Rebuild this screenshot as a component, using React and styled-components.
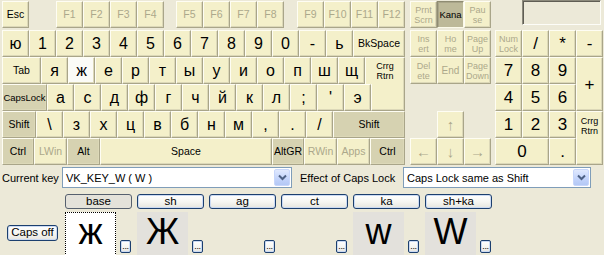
import React from "react";
import styled, { createGlobalStyle, css } from "styled-components";

const GlobalStyle = createGlobalStyle`
  html, body { margin: 0; padding: 0; }
  body {
    background: #ece9d8;
    font-family: "Liberation Sans", Arial, sans-serif;
  }
`;

const faces = {
  normal: "#f4f0ca",
  mod: "#d6d2b1",
  down: "#bdb999",
  sel: "#fbfbf7",
};

const Window = styled.div`
  width: 604px;
  height: 255px;
  overflow: hidden;
  background: #ece9d8;
`;

const Board = styled.div`
  display: flex;
  padding: 1px 0 0 2px;
`;

const Column = styled.div`
  display: flex;
  flex-direction: column;
  gap: 2px;
  margin-left: ${(p) => p.$ml || 0}px;
`;

const Row = styled.div`
  display: flex;
  height: 27px;
`;

const Key = styled.div`
  box-sizing: border-box;
  flex: 0 0 ${(p) => p.$w || 27}px;
  margin-left: ${(p) => p.$ml || 0}px;
  display: flex;
  align-items: ${(p) => (p.$top ? "flex-start" : "center")};
  justify-content: center;
  padding-top: ${(p) => (p.$top ? 4 : 0)}px;
  text-align: center;
  white-space: nowrap;
  font-size: ${(p) => p.$fs || 16}px;
  line-height: ${(p) => (p.$two ? "10px" : 1)};
  color: ${(p) => (p.$dim ? "#aca88b" : "#000")};
  background: ${(p) => faces[p.$v || "normal"]};
  border: 1px solid;
  border-color: ${(p) =>
    p.$v === "down"
      ? "#8f8c72 #fbfaea #fbfaea #8f8c72"
      : "#fefdf3 #a9a589 #a9a589 #fefdf3"};
  box-shadow: ${(p) =>
    p.$v === "down" ? "inset 1px 1px 0 #a9a589" : "inset -1px -1px 0 #dcd8b8"};
  ${(p) =>
    p.$jb &&
    css`
      border-bottom-width: 0;
      box-shadow: inset -1px 0 0 #dcd8b8;
    `}
  ${(p) =>
    p.$jt &&
    css`
      border-top-width: 0;
    `}
  ${(p) =>
    p.$col &&
    css`
      grid-column: ${p.$col} / span ${p.$cs || 1};
      grid-row: ${p.$row} / span ${p.$rs || 1};
    `}
  ${(p) =>
    !p.$col &&
    (p.$cs || p.$rs) &&
    css`
      grid-column: span ${p.$cs || 1};
      grid-row: span ${p.$rs || 1};
    `}
`;

const KeyGrid = styled.div`
  display: grid;
  grid-template-columns: repeat(${(p) => p.$cols}, 27px);
  grid-template-rows: repeat(5, 27px);
`;

const Display = styled.div`
  box-sizing: border-box;
  width: 79px;
  height: 25px;
  margin: -1px 0 3px 27px;
  border: 1px solid;
  border-color: #8c8a7c #fdfdf8 #fdfdf8 #8c8a7c;
  box-shadow: inset 1px 1px 0 #5f5d54;
`;

const Controls = styled.div`
  display: flex;
  align-items: center;
  height: 21px;
  margin-top: 2px;
  padding-left: 2px;
  font-size: 11px;
  color: #000;
`;

const Label = styled.span`
  width: ${(p) => p.$w}px;
  margin-left: ${(p) => p.$ml || 0}px;
  white-space: nowrap;
`;

const Combo = styled.div`
  box-sizing: border-box;
  width: ${(p) => p.$w}px;
  height: 21px;
  display: flex;
  align-items: center;
  padding: 1px 1px 1px 3px;
  background: #fff;
  border: 1px solid #7f9db9;
  font-size: 11px;
`;

const ComboText = styled.span`
  flex: 1;
  white-space: nowrap;
`;

const DropBtn = styled.div`
  box-sizing: border-box;
  width: 16px;
  height: 17px;
  display: flex;
  align-items: center;
  justify-content: center;
  border: 1px solid #c7d6fb;
  border-radius: 2px;
  background: linear-gradient(#e0e9fe, #c2d3fb 60%, #b3c8f5);
`;

const Tabs = styled.div`
  display: flex;
  gap: 5px;
  height: 15px;
  margin-top: 6px;
  padding-left: 65px;
`;

const XpButton = styled.div`
  box-sizing: border-box;
  display: flex;
  align-items: center;
  justify-content: center;
  border: 1px solid #1c3f6e;
  border-radius: 3px;
  background: linear-gradient(#ffffff, #f5f5f1 55%, #e6e5de);
  box-shadow: inset 0 0 0 1px #cbdaf3;
  font-size: 11.5px;
  line-height: 1;
  color: #000;
  white-space: nowrap;
`;

const TabBtn = styled(XpButton)`
  width: 67px;
  height: 15px;
  ${(p) =>
    p.$active &&
    css`
      border-color: #56606e;
      background: #e4e2da;
      box-shadow: none;
    `}
`;

const Chars = styled.div`
  display: flex;
  margin-top: 3px;
`;

const CapsCol = styled.div`
  flex: 0 0 65px;
`;

const CapsBtn = styled(XpButton)`
  width: 51px;
  height: 16px;
  margin: 13px 0 0 7px;
`;

const Group = styled.div`
  flex: 0 0 72px;
  display: flex;
  align-items: flex-start;
`;

const Cell = styled.div`
  box-sizing: border-box;
  flex: 0 0 51px;
  height: 50px;
  display: flex;
  justify-content: center;
  padding-top: 1px;
  font-size: 36px;
  line-height: 36px;
  color: #000;
  background: ${(p) =>
    p.$v === "focus" ? "#fff" : p.$v === "filled" ? "#e3e1dc" : "transparent"};
  border: 1px ${(p) => (p.$v === "focus" ? "dotted #000" : "solid transparent")};
`;

const MoreBtn = styled(XpButton)`
  width: 11px;
  height: 13px;
  margin: 28px 0 0 4px;
  align-items: flex-end;
  overflow: visible;
  font-size: 9px;
  line-height: 9px;
  padding-bottom: 1px;
  border-radius: 2px;
  letter-spacing: -0.3px;
`;

const Chevron = () => (
  <svg width="9" height="7" viewBox="0 0 9 7">
    <path d="M1 1.5 L4.5 5 L8 1.5" fill="none" stroke="#4d6185" strokeWidth="2" />
  </svg>
);

const rowOne = ["ю", "1", "2", "3", "4", "5", "6", "7", "8", "9", "0", "-", "ь"];
const rowTwo = ["я", "ж", "е", "р", "т", "ы", "у", "и", "о", "п", "ш", "щ"];
const rowThree = ["а", "с", "д", "ф", "г", "ч", "й", "к", "л", ";", "'", "э"];
const rowFour = ["\\", "з", "х", "ц", "в", "б", "н", "м", ",", ".", "/"];

const tabs = ["base", "sh", "ag", "ct", "ka", "sh+ka"];
const cells = [
  { v: "focus", ch: "ж" },
  { v: "filled", ch: "Ж" },
  { v: "empty", ch: "" },
  { v: "empty", ch: "" },
  { v: "filled", ch: "w" },
  { v: "filled", ch: "W" },
];

const Two = ({ a, b }) => (
  <span>
    {a}
    <br />
    {b}
  </span>
);

export default function App() {
  return (
    <Window>
      <GlobalStyle />
      <Board>
        <Column>
          <Row>
            <Key $fs={10.5}>Esc</Key>
            {["F1", "F2", "F3", "F4"].map((f, i) => (
              <Key key={f} $fs={10.5} $dim $ml={i === 0 ? 27 : 0}>{f}</Key>
            ))}
            {["F5", "F6", "F7", "F8"].map((f, i) => (
              <Key key={f} $fs={10.5} $dim $ml={i === 0 ? 12 : 0}>{f}</Key>
            ))}
            {["F9", "F10", "F11", "F12"].map((f, i) => (
              <Key key={f} $fs={10.5} $dim $ml={i === 0 ? 13 : 0}>{f}</Key>
            ))}
          </Row>
          <div>
            <Row>
              {rowOne.map((c) => (
                <Key key={c}>{c}</Key>
              ))}
              <Key $w={52} $fs={10.5}>BkSpace</Key>
            </Row>
            <Row>
              <Key $w={39} $fs={10.5}>Tab</Key>
              {rowTwo.map((c) => (
                <Key key={c} $v={c === "ж" ? "sel" : "normal"}>{c}</Key>
              ))}
              <Key $w={40} $fs={9} $two $jb><Two a="Crrg" b="Rtrn" /></Key>
            </Row>
            <Row>
              <Key $w={45} $fs={9.5} $v="mod">CapsLock</Key>
              {rowThree.map((c) => (
                <Key key={c}>{c}</Key>
              ))}
              <Key $w={34} $jt />
            </Row>
            <Row>
              <Key $w={34} $fs={10.5} $v="mod">Shift</Key>
              {rowFour.map((c) => (
                <Key key={c}>{c}</Key>
              ))}
              <Key $w={72} $fs={10.5} $v="mod">Shift</Key>
            </Row>
            <Row>
              <Key $w={32} $fs={10.5} $v="mod">Ctrl</Key>
              <Key $w={33} $fs={10.5} $dim>LWin</Key>
              <Key $w={33} $fs={10.5} $v="mod">Alt</Key>
              <Key $w={172} $fs={10.5}>Space</Key>
              <Key $w={32} $fs={10.5} $v="mod">AltGR</Key>
              <Key $w={33} $fs={10.5} $dim>RWin</Key>
              <Key $w={33} $fs={10.5} $dim>Apps</Key>
              <Key $w={35} $fs={10.5} $v="mod">Ctrl</Key>
            </Row>
          </div>
        </Column>

        <Column $ml={5}>
          <Row>
            <Key $fs={9} $two $dim><Two a="Prnt" b="Scrn" /></Key>
            <Key $fs={9.5} $v="down">Kana</Key>
            <Key $fs={9} $two $dim><Two a="Pau" b="se" /></Key>
          </Row>
          <KeyGrid $cols={3}>
            <Key $fs={9} $two $dim><Two a="Ins" b="ert" /></Key>
            <Key $fs={9} $two $dim><Two a="Ho" b="me" /></Key>
            <Key $fs={9} $two $dim><Two a="Page" b="Up" /></Key>
            <Key $fs={9} $two $dim><Two a="Del" b="ete" /></Key>
            <Key $fs={10} $dim>End</Key>
            <Key $fs={9} $two $dim><Two a="Page" b="Down" /></Key>
            <Key $col={2} $row={4} $fs={15} $dim>↑</Key>
            <Key $col={1} $row={5} $fs={15} $dim>←</Key>
            <Key $col={2} $row={5} $fs={15} $dim>↓</Key>
            <Key $col={3} $row={5} $fs={15} $dim>→</Key>
          </KeyGrid>
        </Column>

        <Column $ml={4}>
          <Display />
          <KeyGrid $cols={4}>
            <Key $fs={9} $two $dim><Two a="Num" b="Lock" /></Key>
            <Key $fs={17}>/</Key>
            <Key $fs={17}>*</Key>
            <Key $fs={17}>-</Key>
            <Key $fs={17}>7</Key>
            <Key $fs={17}>8</Key>
            <Key $fs={17}>9</Key>
            <Key $fs={17} $rs={2}>+</Key>
            <Key $fs={17}>4</Key>
            <Key $fs={17}>5</Key>
            <Key $fs={17}>6</Key>
            <Key $fs={17}>1</Key>
            <Key $fs={17}>2</Key>
            <Key $fs={17}>3</Key>
            <Key $fs={9} $two $top $rs={2}><Two a="Crrg" b="Rtrn" /></Key>
            <Key $fs={17} $cs={2}>0</Key>
            <Key $fs={17}>.</Key>
          </KeyGrid>
        </Column>
      </Board>

      <Controls>
        <Label $w={60}>Current key</Label>
        <Combo $w={230}>
          <ComboText>VK_KEY_W ( W )</ComboText>
          <DropBtn><Chevron /></DropBtn>
        </Combo>
        <Label $w={103} $ml={8}>Effect of Caps Lock</Label>
        <Combo $w={188}>
          <ComboText>Caps Lock same as Shift</ComboText>
          <DropBtn><Chevron /></DropBtn>
        </Combo>
      </Controls>

      <Tabs>
        {tabs.map((t, i) => (
          <TabBtn key={t} $active={i === 0}>{t}</TabBtn>
        ))}
      </Tabs>

      <Chars>
        <CapsCol>
          <CapsBtn>Caps off</CapsBtn>
        </CapsCol>
        {cells.map((c, i) => (
          <Group key={i}>
            <Cell $v={c.v}>{c.ch}</Cell>
            <MoreBtn>...</MoreBtn>
          </Group>
        ))}
      </Chars>
    </Window>
  );
}
